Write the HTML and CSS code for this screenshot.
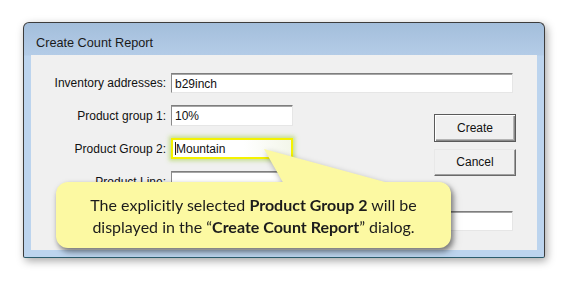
FILE: index.html
```html
<!DOCTYPE html>
<html>
<head>
<meta charset="utf-8">
<link rel="stylesheet" href="styles.css">
</head>
<body>
<div class="window">
  <div class="titlebar">Create Count Report</div>
  <div class="client">
    <div class="row">
      <span class="label">Inventory addresses:</span>
      <div class="field wide">b29inch</div>
    </div>
    <div class="lower">
      <div class="fields">
        <div class="row">
          <span class="label">Product group 1:</span>
          <div class="field short">10%</div>
        </div>
        <div class="row">
          <span class="label">Product Group 2:</span>
          <div class="field short focus"><span class="caret"></span>Mountain</div>
        </div>
        <div class="row">
          <span class="label">Product Line:</span>
          <div class="field short"></div>
        </div>
      </div>
      <div class="buttons">
        <div class="btn default">Create</div>
        <div class="btn">Cancel</div>
      </div>
    </div>
    <div class="row last">
      <span class="label"></span>
      <div class="field wide"></div>
    </div>
  </div>
  <div class="callout">
    <svg class="pointer" width="140" height="38" viewBox="0 0 140 38"><polygon points="8,1 29,38 129,38 129,34" fill="#fcf9a2"/></svg>
    <p class="callout-text">The explicitly selected <b>Product Group 2</b> will be<br>displayed in the “<b>Create Count Report</b>” dialog.</p>
  </div>
</div>
</body>
</html>
```
FILE: styles.css
```css
html, body {
  margin: 0;
  background: #ffffff;
}
body {
  padding: 22px 0 0 23px;
  width: 568px;
  height: 281px;
  box-sizing: border-box;
  overflow: hidden;
}
.window {
  position: relative;
  width: 522px;
  height: 236px;
  box-sizing: border-box;
  border: 1px solid #3c3c3c;
  border-bottom-color: #2b5c6c;
  border-radius: 6px 6px 2px 2px;
  background: linear-gradient(#a3bedb 0px, #b4cce7 32px, #bcd4ee 33px, #bcd4ee 100%);
  padding: 0 7px 7px 7px;
  box-shadow: 2px 3px 9px rgba(0, 0, 0, 0.35);
  display: flex;
  flex-direction: column;
}
.titlebar {
  height: 32px;
  box-sizing: border-box;
  padding: 13px 0 0 5px;
  font-family: "Liberation Sans", Arial, sans-serif;
  font-size: 12.7px;
  line-height: 15px;
  color: #1a1a1a;
}
.client {
  flex: 1;
  background: #f0f0f0;
  padding-top: 18px;
  font-family: "Liberation Sans", Arial, sans-serif;
  font-size: 12px;
  color: #111;
}
.row {
  display: flex;
  align-items: center;
  gap: 5px;
}
.label {
  width: 135px;
  text-align: right;
  white-space: nowrap;
}
.field {
  height: 21px;
  box-sizing: border-box;
  background: #ffffff;
  border: 1px solid;
  border-color: #7e7e7e #e6e6e6 #e6e6e6 #8a8a8a;
  box-shadow: inset 0 1px 0 #a6a6a6;
  padding: 3px 0 0 3px;
  line-height: 14px;
  white-space: nowrap;
}
.field.wide {
  width: 342px;
  height: 20px;
}
.field.short {
  width: 122px;
}
.field.focus {
  border: 2px solid #f4f200;
  box-shadow: 0 0 4px 2px rgba(176, 214, 96, 0.65);
  padding: 2px 0 0 2px;
  background: linear-gradient(90deg, #ffffff 60%, #f3f6ea 100%);
  position: relative;
}
.caret {
  display: inline-block;
  width: 1px;
  height: 13px;
  background: #222;
  vertical-align: -2px;
}
.lower {
  display: flex;
  margin-top: 12px;
}
.fields {
  display: flex;
  flex-direction: column;
  gap: 12px;
}
.buttons {
  display: flex;
  flex-direction: column;
  gap: 7px;
  margin: 9px 0 0 141px;
}
.btn {
  width: 82px;
  height: 27px;
  box-sizing: border-box;
  border: 1px solid;
  border-color: #e8e8e8 #6a6a6a #6a6a6a #e8e8e8;
  box-shadow: inset -1px -1px 0 #a0a0a0;
  background: #f0f0f0;
  display: flex;
  align-items: center;
  justify-content: center;
  padding-bottom: 1px;
}
.btn.default {
  height: 28px;
  border-color: #5a5a5a;
  box-shadow: inset 1px 1px 0 #ffffff, inset -1px -1px 0 #8a8a8a, inset -2px -2px 0 #b4b4b4;
}
.row.last {
  margin-top: 19px;
}
.callout {
  position: absolute;
  left: 32px;
  top: 159px;
  width: 395px;
  height: 66px;
  box-sizing: border-box;
  background: #fcf9a2;
  border-radius: 12px;
  filter: drop-shadow(2px 3px 3px rgba(0, 0, 0, 0.35));
  box-shadow: 2px 3px 5px rgba(0, 0, 0, 0.25);
}
.pointer {
  position: absolute;
  left: 200px;
  top: -34px;
}
.callout-text {
  position: relative;
  margin: 0;
  padding-top: 12px;
  text-align: center;
  font-family: Lato, "Open Sans", sans-serif;
  font-size: 16px;
  line-height: 22px;
  color: #1c1c1c;
}
.callout-text b {
  font-weight: 700;
}
```
